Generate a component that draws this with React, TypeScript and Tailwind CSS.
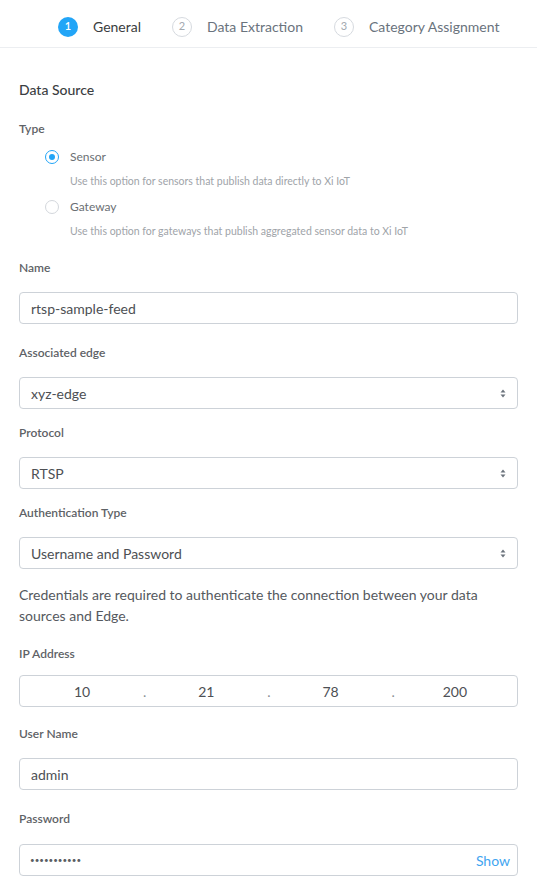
import React from "react";

const Label = ({ children, className = "" }: { children: React.ReactNode; className?: string }) => (
  <div className={`text-[12px] leading-[16px] font-semibold text-[#5e6266] ${className}`}>{children}</div>
);

const SelectArrows = () => (
  <svg width="6" height="9" viewBox="0 0 6 9" className="shrink-0">
    <path d="M3 0.5 L5.5 3.5 H0.5 Z" fill="#6b737c" />
    <path d="M3 8.5 L5.5 5.5 H0.5 Z" fill="#6b737c" />
  </svg>
);

const TextBox = ({ value, className = "" }: { value: string; className?: string }) => (
  <div className={`h-[32px] rounded-[4px] border border-[#cdd2d8] flex items-center pl-[11px] pr-[12px] text-[14px] text-[#4d5054] ${className}`}>
    {value}
  </div>
);

const SelectBox = ({ value, className = "" }: { value: string; className?: string }) => (
  <div className={`h-[32px] rounded-[4px] border border-[#cdd2d8] flex items-center justify-between pl-[11px] pr-[11px] text-[14px] text-[#4d5054] ${className}`}>
    <span>{value}</span>
    <SelectArrows />
  </div>
);

const Step = ({ n, label, active }: { n: number; label: string; active?: boolean }) => (
  <div className="flex items-center gap-[15px]">
    <div
      className={
        active
          ? "w-[20px] h-[20px] rounded-full bg-[#22a5f7] text-white text-[11px] font-semibold flex items-center justify-center"
          : "w-[20px] h-[20px] rounded-full border border-[#d6dadf] text-[#a3a9b0] text-[11px] flex items-center justify-center"
      }
    >
      {n}
    </div>
    <span className={`text-[14px] ${active ? "text-[#3a3d40]" : "text-[#6a737d]"}`}>{label}</span>
  </div>
);

const Radio = ({ checked, label, desc, className = "" }: { checked?: boolean; label: string; desc: string; className?: string }) => (
  <div className={`pl-[26px] ${className}`}>
    <div className="flex items-center h-[16px] gap-[11px]">
      {checked ? (
        <div className="w-[14px] h-[14px] rounded-full border-[1.5px] border-[#22a5f7] flex items-center justify-center">
          <div className="w-[6px] h-[6px] rounded-full bg-[#22a5f7]" />
        </div>
      ) : (
        <div className="w-[14px] h-[14px] rounded-full border border-[#d3d7dc]" />
      )}
      <span className="text-[12px] text-[#6b6f74]">{label}</span>
    </div>
    <div className="mt-[9px] pl-[25px] text-[10.5px] leading-[14px] text-[#a0a4a9]">{desc}</div>
  </div>
);

export default function App() {
  return (
    <div className="w-[537px] min-h-[888px] bg-white font-['Lato',sans-serif]">
      <div className="h-[48px] border-b border-[#eceef1] flex items-center pt-[6px] pl-[58px] gap-[31px]">
        <Step n={1} label="General" active />
        <Step n={2} label="Data Extraction" />
        <Step n={3} label="Category Assignment" />
      </div>

      <div className="px-[19px] pb-[13px]">
        <div className="mt-[32px] text-[14px] leading-[20px] font-medium text-[#3b3e42]">Data Source</div>

        <Label className="mt-[21px]">Type</Label>
        <Radio className="mt-[12px]" checked label="Sensor" desc="Use this option for sensors that publish data directly to Xi IoT" />
        <Radio className="mt-[11px]" label="Gateway" desc="Use this option for gateways that publish aggregated sensor data to Xi IoT" />

        <Label className="mt-[22px]">Name</Label>
        <TextBox className="mt-[16px]" value="rtsp-sample-feed" />

        <Label className="mt-[21px]">Associated edge</Label>
        <SelectBox className="mt-[16px]" value="xyz-edge" />

        <Label className="mt-[16px]">Protocol</Label>
        <SelectBox className="mt-[16px]" value="RTSP" />

        <Label className="mt-[16px]">Authentication Type</Label>
        <SelectBox className="mt-[16px]" value="Username and Password" />

        <p className="mt-[15px] max-w-[476px] text-[14px] leading-[21px] text-[#55595e]">
          Credentials are required to authenticate the connection between your data sources and Edge.
        </p>

        <Label className="mt-[20px]">IP Address</Label>
        <div className="mt-[13px] h-[32px] rounded-[4px] border border-[#cdd2d8] grid grid-cols-4 text-[14px] text-[#4d5054]">
          {["10", "21", "78", "200"].map((v, i) => (
            <div key={v} className="relative flex items-center justify-center">
              {v}
              {i < 3 && <span className="absolute right-[-2px] top-[5px] text-[#8a8f94]">.</span>}
            </div>
          ))}
        </div>

        <Label className="mt-[19px]">User Name</Label>
        <TextBox className="mt-[16px]" value="admin" />

        <Label className="mt-[21px]">Password</Label>
        <div className="mt-[17px] h-[32px] rounded-[4px] border border-[#cdd2d8] flex items-center justify-between pl-[10px] pr-[7px]">
          <span className="text-[8px] tracking-[0px] text-[#5a5e63]">•••••••••••</span>
          <span className="text-[14px] text-[#3fa5f0]">Show</span>
        </div>
      </div>
    </div>
  );
}
